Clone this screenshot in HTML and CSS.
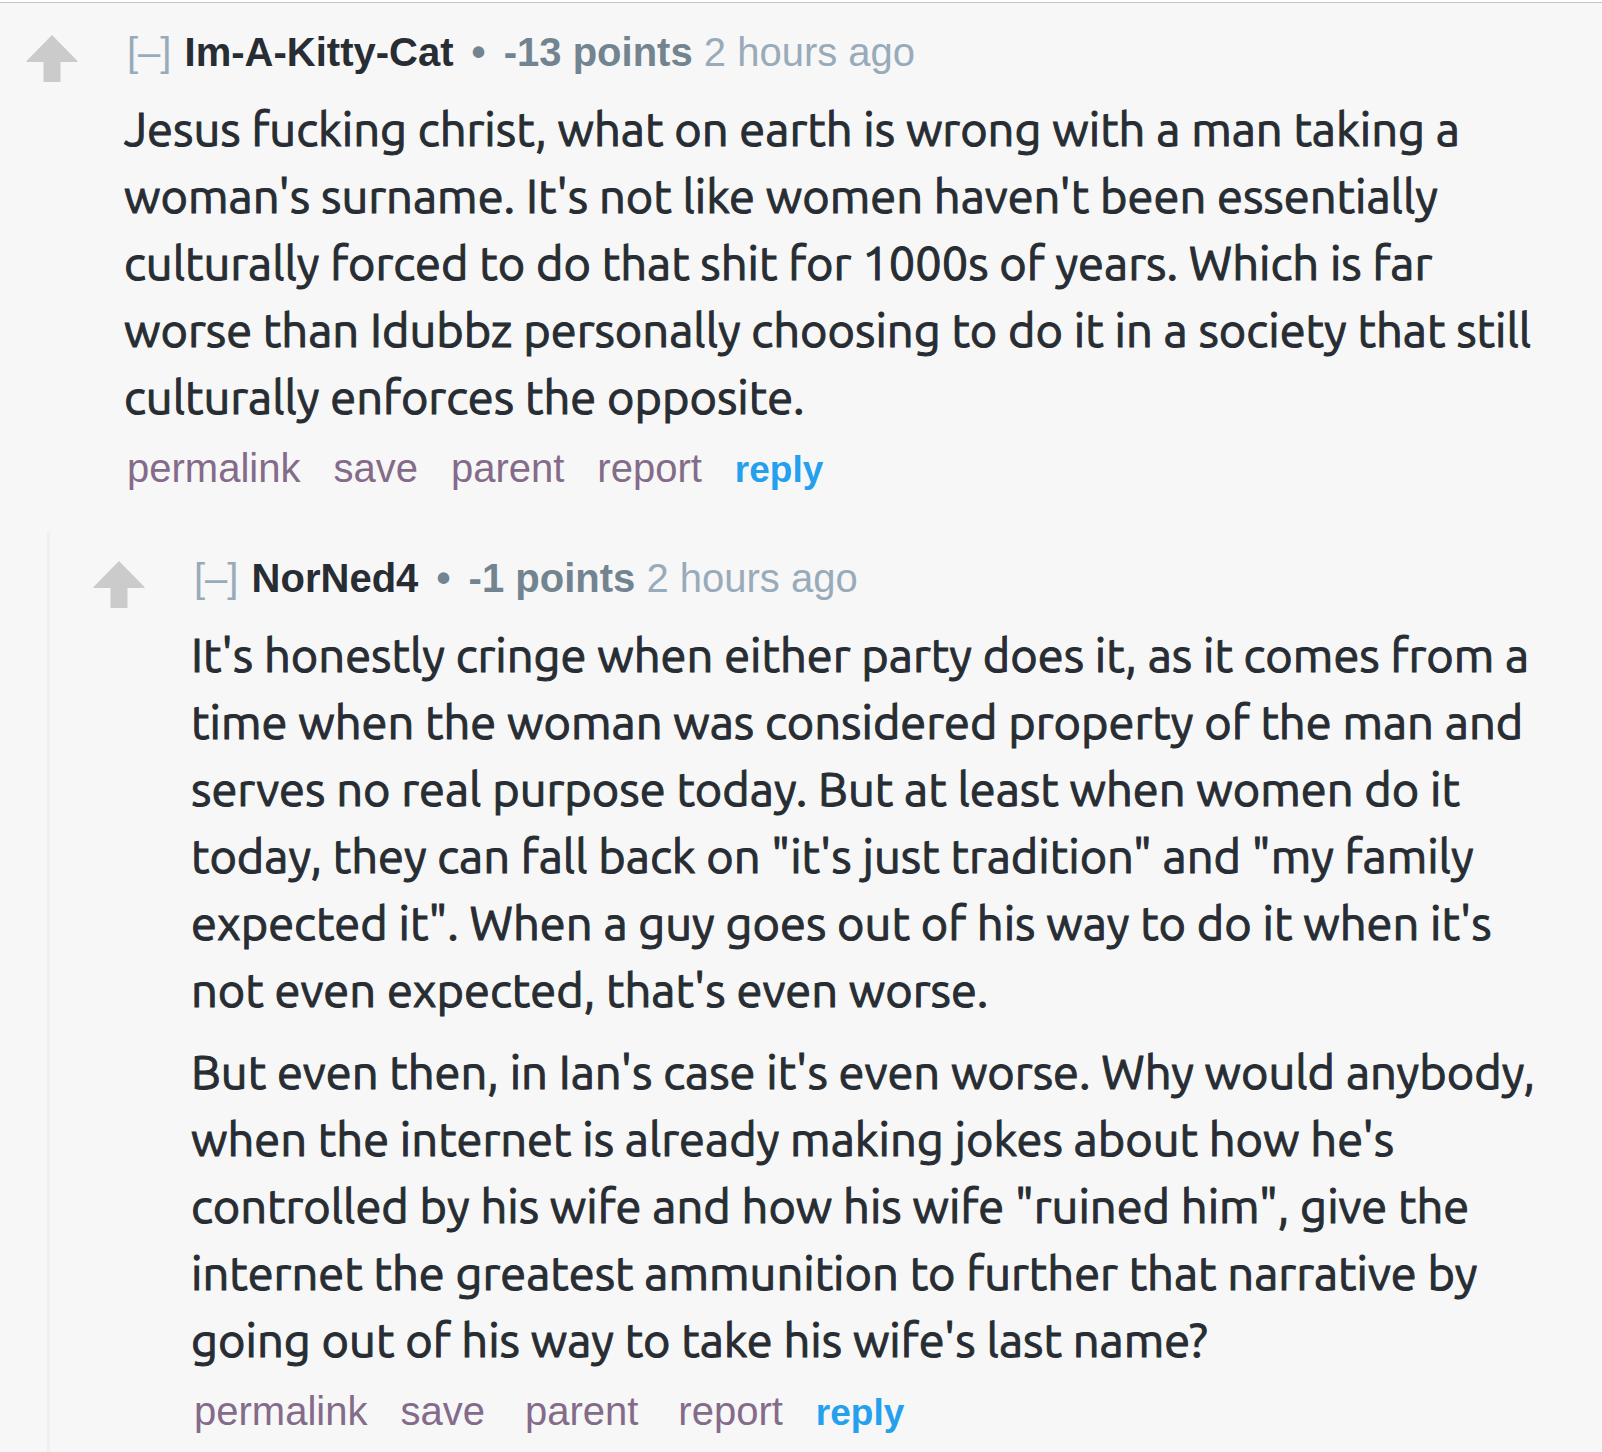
FILE: index.html
```
<!DOCTYPE html>
<html lang="en">
<head>
<meta charset="utf-8">
<title>Comments</title>
<link rel="stylesheet" href="styles.css">
</head>
<body>

<div class="comments">
  <div class="comment">
    <button class="upvote" aria-label="upvote">
      <svg width="52" height="48" viewBox="0 0 52 48"><path d="M26 0 L51.500 26 V27 H34.500 V47 H17.500 V27 H0.500 V26 Z" fill="#cbcbcb"/></svg>
    </button>
    <div class="entry">
      <p class="tagline">
        <a href="#" class="expand">[–]</a>
        <a href="#" class="author">Im-A-Kitty-Cat</a>
        <span class="dot">•</span>
        <span class="score">-13 points</span>
        <time>2 hours ago</time>
      </p>
      <div class="text">
        <p>Jesus fucking christ, what on earth is wrong with a man taking a<br>
        woman's surname. It's not like women haven't been essentially<br>
        culturally forced to do that shit for 1000s of years. Which is far<br>
        worse than Idubbz personally choosing to do it in a society that still<br>
        culturally enforces the opposite.</p>
      </div>
      <ul class="buttons">
        <li><a href="#">permalink</a></li>
        <li><a href="#">save</a></li>
        <li><a href="#">parent</a></li>
        <li><a href="#">report</a></li>
        <li><a href="#" class="reply">reply</a></li>
      </ul>
    </div>
  </div>

  <div class="child">
    <div class="comment">
      <button class="upvote" aria-label="upvote">
        <svg width="52" height="48" viewBox="0 0 52 48"><path d="M26 0 L51.500 26 V27 H34.500 V47 H17.500 V27 H0.500 V26 Z" fill="#cbcbcb"/></svg>
      </button>
      <div class="entry">
        <p class="tagline">
          <a href="#" class="expand">[–]</a>
          <a href="#" class="author">NorNed4</a>
          <span class="dot">•</span>
          <span class="score">-1 points</span>
          <time>2 hours ago</time>
        </p>
        <div class="text">
          <p>It's honestly cringe when either party does it, as it comes from a<br>
          time when the woman was considered property of the man and<br>
          serves no real purpose today. But at least when women do it<br>
          today, they can fall back on "it's just tradition" and "my family<br>
          expected it". When a guy goes out of his way to do it when it's<br>
          not even expected, that's even worse.</p>
          <p>But even then, in Ian's case it's even worse. Why would anybody,<br>
          when the internet is already making jokes about how he's<br>
          controlled by his wife and how his wife "ruined him", give the<br>
          internet the greatest ammunition to further that narrative by<br>
          going out of his way to take his wife's last name?</p>
        </div>
        <ul class="buttons">
          <li><a href="#">permalink</a></li>
          <li><a href="#">save</a></li>
          <li class="spaced"><a href="#">parent</a></li>
          <li class="spaced"><a href="#">report</a></li>
          <li><a href="#" class="reply">reply</a></li>
        </ul>
      </div>
    </div>
  </div>
</div>

</body>
</html>
```
FILE: styles.css
```
body {
  margin: 0;
  background-color: #f7f7f7;
  font-family: "Liberation Sans", Arial, sans-serif;
  font-size: 40px;
  line-height: 46px;
  color: #272d33;
}

a {
  text-decoration: none;
}

.comments {
  box-sizing: border-box;
  min-height: 100vh;
  display: flex;
  flex-direction: column;
  border-top: 2px solid #fff;
  box-shadow: inset 0 1px 0 #c6c6c6;
  padding-top: 4px;
}

.comment {
  display: flex;
  align-items: flex-start;
  padding-top: 23px;
}

.upvote {
  flex: none;
  margin: 6px 46px 0 26px;
  padding: 0;
  border: none;
  background: none;
  cursor: pointer;
}

.upvote svg {
  display: block;
}

.entry {
  flex: 1;
  min-width: 0;
}

.tagline {
  margin: 0 0 20px;
  padding-left: 3px;
}

.expand,
time {
  color: #98abba;
}

.author {
  margin-left: 2px;
  font-weight: bold;
  color: #272d33;
}

.dot {
  margin: 0 7px;
}

.dot,
.score {
  font-weight: bold;
  color: #728490;
}

.text {
  font-family: Ubuntu, "Noto Sans", sans-serif;
  font-size: 47px;
  line-height: 67px;
  white-space: nowrap;
  -webkit-text-stroke: 1px #272d33;
}

.text p {
  margin: 0 0 15px;
}

.buttons {
  display: flex;
  align-items: baseline;
  gap: 33px;
  margin: 0;
  padding: 0 0 0 3px;
  list-style: none;
}

.buttons a {
  color: #846b8a;
}

.buttons .spaced {
  margin-left: 7px;
}

.buttons .reply {
  font-size: 37px;
  font-weight: bold;
  color: #24a0ed;
}

.child {
  flex: 1;
  margin: 39px 0 0 47px;
  padding-left: 17px;
  border-left: 3px solid #edf1f5;
}
```
